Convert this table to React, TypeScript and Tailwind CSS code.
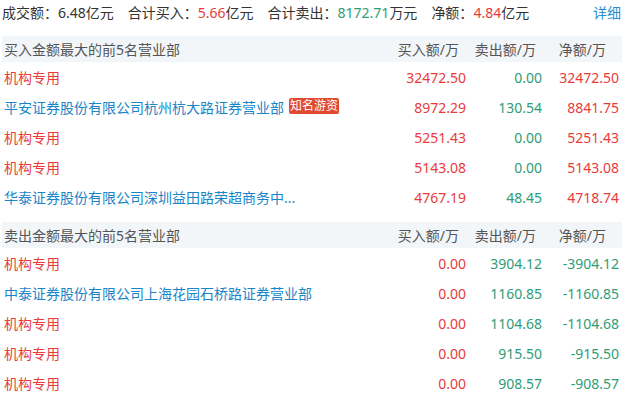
import React from "react";

const RED = "text-[#e93b3b]";
const GREEN = "text-[#2f9d78]";
const BLUE = "text-[#1a85c8]";

type Row = { name: string; link?: boolean; badge?: boolean; buy: string; sell: string; net: string; netUp: boolean };

const buyRows: Row[] = [
  { name: "机构专用", buy: "32472.50", sell: "0.00", net: "32472.50", netUp: true },
  { name: "平安证券股份有限公司杭州杭大路证券营业部", link: true, badge: true, buy: "8972.29", sell: "130.54", net: "8841.75", netUp: true },
  { name: "机构专用", buy: "5251.43", sell: "0.00", net: "5251.43", netUp: true },
  { name: "机构专用", buy: "5143.08", sell: "0.00", net: "5143.08", netUp: true },
  { name: "华泰证券股份有限公司深圳益田路荣超商务中...", link: true, buy: "4767.19", sell: "48.45", net: "4718.74", netUp: true },
];

const sellRows: Row[] = [
  { name: "机构专用", buy: "0.00", sell: "3904.12", net: "-3904.12", netUp: false },
  { name: "中泰证券股份有限公司上海花园石桥路证券营业部", link: true, buy: "0.00", sell: "1160.85", net: "-1160.85", netUp: false },
  { name: "机构专用", buy: "0.00", sell: "1104.68", net: "-1104.68", netUp: false },
  { name: "机构专用", buy: "0.00", sell: "915.50", net: "-915.50", netUp: false },
  { name: "机构专用", buy: "0.00", sell: "908.57", net: "-908.57", netUp: false },
];

function Table({ title, rows }: { title: string; rows: Row[] }) {
  return (
    <div className="ml-[2px] w-[620px]">
      <div className="grid h-[26px] grid-cols-[1fr_76px_76px_77px] items-center bg-[#f3f6f9] pr-[3px] text-[#555]">
        <div className="pl-[2px]">{title}</div>
        <div className="pr-[7px] text-right">买入额/万</div>
        <div className="pr-[6px] text-right">卖出额/万</div>
        <div className="pr-[13px] text-right">净额/万</div>
      </div>
      {rows.map((r, i) => (
        <div key={i} className="grid h-[30px] grid-cols-[1fr_76px_76px_77px] items-center pr-[3px]">
          <div className="flex items-center whitespace-nowrap pl-[2px]">
            <span className={r.link ? BLUE : RED}>{r.name}</span>
            {r.badge && (
              <span className="relative top-[-1px] ml-[5px] rounded-[2px] bg-[#df4a31] px-[1px] text-[12px] leading-[16px] text-white">
                知名游资
              </span>
            )}
          </div>
          <div className={`text-right ${RED}`}>{r.buy}</div>
          <div className={`text-right ${GREEN}`}>{r.sell}</div>
          <div className={`text-right ${r.netUp ? RED : GREEN}`}>{r.net}</div>
        </div>
      ))}
    </div>
  );
}

export default function App() {
  return (
    <div
      className="h-[396px] w-[628px] overflow-hidden bg-white text-[14px] text-[#333]"
      style={{ fontFamily: '"Noto Sans", "Noto Sans CJK SC", sans-serif' }}
    >
      <div className="flex h-[24px] items-center pl-[2px] pr-[7px]">
        <span>成交额：6.48亿元</span>
        <span className="ml-[14px]">
          合计买入：<span className={RED}>5.66</span>亿元
        </span>
        <span className="ml-[14px]">
          合计卖出：<span className={GREEN}>8172.71</span>万元
        </span>
        <span className="ml-[14px]">
          净额：<span className={RED}>4.84</span>亿元
        </span>
        <span className="ml-auto text-[#2a8dd5]">详细</span>
      </div>
      <div className="mt-[12px]">
        <Table title="买入金额最大的前5名营业部" rows={buyRows} />
      </div>
      <div className="mt-[10px]">
        <Table title="卖出金额最大的前5名营业部" rows={sellRows} />
      </div>
    </div>
  );
}
